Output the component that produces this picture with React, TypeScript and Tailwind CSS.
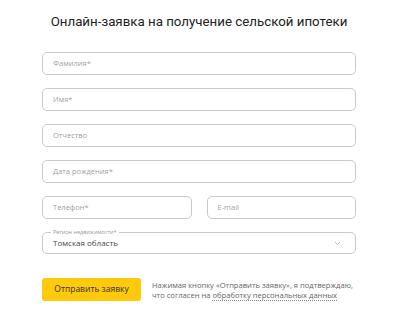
import React from "react";

function Field({ label, className = "" }: { label: string; className?: string }) {
  return (
    <div
      className={`h-[23px] rounded-[5px] border border-[#c9c9c9] bg-white flex items-center pl-[10px] text-[7.5px] text-[#9f9f9f] ${className}`}
    >
      {label}
    </div>
  );
}

export default function App() {
  return (
    <div
      className="w-[405px] h-[320px] bg-white overflow-hidden"
      style={{ fontFamily: '"Open Sans", "Liberation Sans", sans-serif' }}
    >
      <div
        className="pt-[11px] text-center text-[13.3px] leading-[22px] text-[#222] pr-[7px]"
        style={{ fontFamily: 'Roboto, "Open Sans", sans-serif' }}
      >
        Онлайн-заявка на получение сельской ипотеки
      </div>
      <div className="ml-[42px] w-[314px] mt-[19px] flex flex-col gap-[13px]">
        <Field label="Фамилия*" />
        <Field label="Имя*" />
        <Field label="Отчество" />
        <Field label="Дата рождения*" />
        <div className="flex gap-[15px]">
          <Field label="Телефон*" className="flex-1" />
          <Field label="E-mail" className="flex-1" />
        </div>
        <div className="relative h-[22px] rounded-[5px] border border-[#c9c9c9] bg-white flex items-center pl-[10px] pr-[14px] text-[8px] text-[#444]">
          <span className="absolute left-[8px] -top-[4px] bg-white px-[2px] text-[5.5px] leading-[7px] text-[#999]">
            Регион недвижимости*
          </span>
          <span className="flex-1">Томская область</span>
          <svg width="7" height="5" viewBox="0 0 7 5" fill="none">
            <path d="M1 1l2.5 2.5L6 1" stroke="#aaa" strokeWidth="0.8" />
          </svg>
        </div>
      </div>
      <div className="ml-[42px] mt-[24px] flex items-center gap-[11px]">
        <div className="w-[99px] h-[23px] rounded-[3px] bg-[#ffc90c] flex items-center justify-center text-[8.5px] text-[#333]">
          Отправить заявку
        </div>
        <div className="text-[7.6px] leading-[10px] text-[#666] whitespace-nowrap">
          <div>Нажимая кнопку «Отправить заявку», я подтверждаю,</div>
          <div>
            что согласен на{" "}
            <span className="border-b border-dotted border-[#888]">обработку персональных данных</span>
          </div>
        </div>
      </div>
    </div>
  );
}
